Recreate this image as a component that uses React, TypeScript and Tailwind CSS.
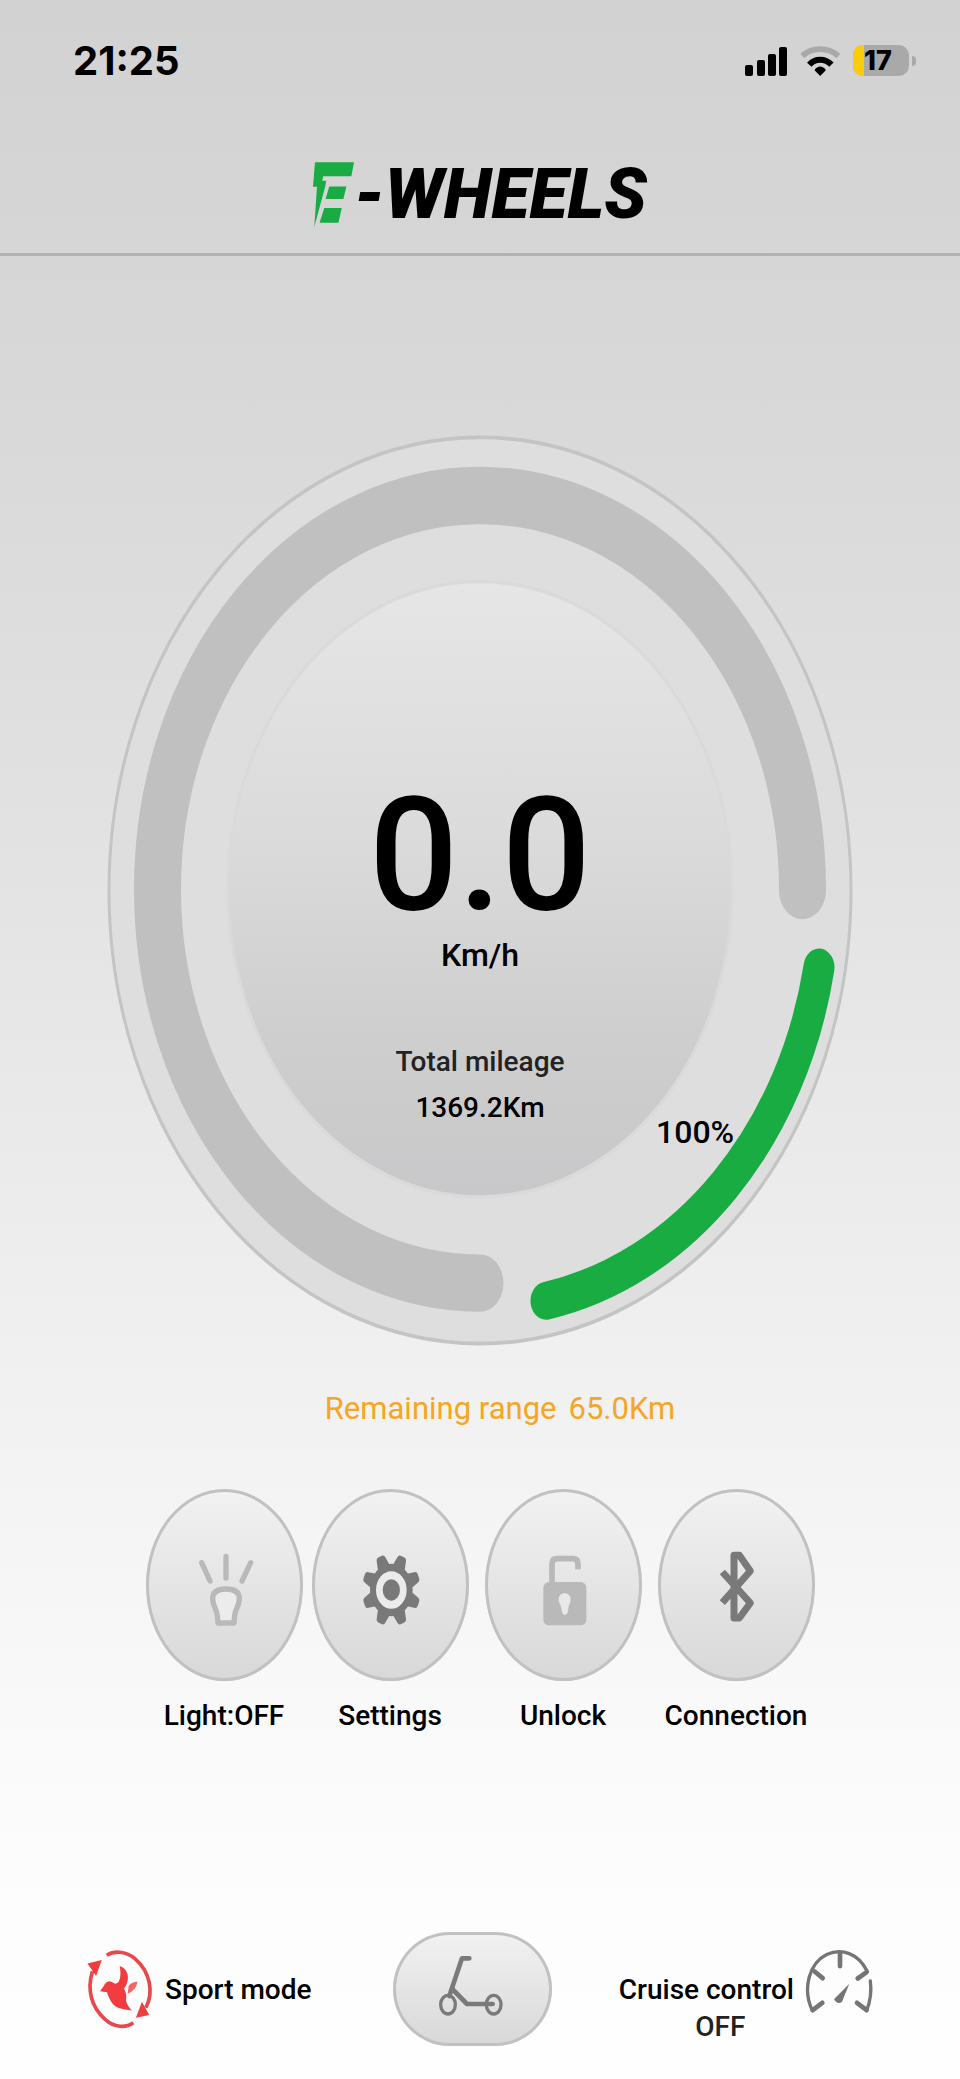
import type { ReactNode } from "react";

function StatusBar() {
  return (
    <div className="flex h-[121px] items-center justify-between pl-[73px] pr-[44px]">
      <span className="font-['Inter',sans-serif] text-[40px] font-bold leading-[40px] text-black">21:25</span>
      <div className="flex items-center gap-[12px]">
        {/* signal */}
        <svg viewBox="0 0 43 30" className="h-[30px] w-[43px]" fill="#000">
          <rect x="0" y="19" width="8" height="11" rx="2" />
          <rect x="12" y="14" width="8" height="16" rx="2" />
          <rect x="23" y="8" width="8" height="22" rx="2" />
          <rect x="34" y="1" width="8" height="29" rx="2" />
        </svg>
        {/* wifi */}
        <svg viewBox="238 42 124 96" className="h-[32px] w-[41px]" fill="none">
          <path d="M245 75C273 47 325 47 354 75" stroke="#a9a9a9" strokeWidth="17" />
          <path d="M266 101C284 81 314 81 333 101" stroke="#000" strokeWidth="18" />
          <path d="M299 135L282 118C290 103 308 103 316 118Z" fill="#000" />
        </svg>
        {/* battery */}
        <div className="flex items-center gap-[3px]">
          <div className="flex h-[31px] w-[56px] items-center overflow-hidden rounded-[10px] bg-[#a9a9a9]">
            <div className="h-full w-[11px] bg-[#fdcc08]" />
            <span className="font-['Inter',sans-serif] text-[27px] font-extrabold leading-[30px] text-black">17</span>
          </div>
          <div className="h-[10px] w-[4px] rounded-r-full bg-[#a9a9a9]" />
        </div>
      </div>
    </div>
  );
}

function Logo() {
  return (
    <div className="flex items-center justify-center">
      <svg viewBox="66 69 124 195" className="h-[65px] w-[41px]" fill="#18ac42">
        <path d="M72 69H190L182 111H97L94 125H106L103 142L70 264L78 143H66Z" />
        <path d="M115 142H167L158 180H104Z" />
        <path d="M100 207H153L143 252H86Z" />
      </svg>
      <span className="text-[70px] font-black italic leading-[66px] text-black">-WHEELS</span>
    </div>
  );
}

function Dial() {
  return (
    <div className="relative mx-auto w-[746px] max-w-full">
      <svg viewBox="0 0 746 746" preserveAspectRatio="none" className="block h-[911px] w-full" fill="none">
        <defs>
          <linearGradient id="disc" x1="0" y1="0" x2="0" y2="1">
            <stop offset="0" stopColor="#e6e6e6" />
            <stop offset="0.4" stopColor="#dbdbdc" />
            <stop offset="0.75" stopColor="#cecece" />
            <stop offset="1" stopColor="#c8c8ca" />
          </linearGradient>
        </defs>
        <circle cx="373" cy="373" r="371" fill="#dedede" stroke="#c4c4c4" strokeWidth="3" />
        <circle cx="373" cy="372" r="252" fill="url(#disc)" stroke="#dadada" strokeWidth="3" />
        {/* speed track */}
        <path d="M695.5 373A322.5 322.5 0 1 0 373 694.5" stroke="#c0c0c0" strokeWidth="47" strokeLinecap="round" />
        {/* battery level */}
        <path d="M712 436A344 344 0 0 1 439 709" stroke="#18ac42" strokeWidth="31" strokeLinecap="round" />
      </svg>
      <div className="absolute inset-0 flex flex-col items-center pt-[340px] text-black">
        <span className="text-[157px] font-medium leading-[160px]">0.0</span>
        <span className="text-[32px] font-medium leading-[40px]">Km/h</span>
        <span className="mt-[64px] text-[28px] font-medium leading-[46px] text-[#222224]">Total mileage</span>
        <span className="text-[28px] font-medium leading-[46px]">1369.2Km</span>
      </div>
      <span className="absolute left-[549px] top-[677px] text-[32px] font-medium leading-[40px] text-black">100%</span>
    </div>
  );
}

const TEETH = [22.5, 67.5, 112.5, 157.5, 202.5, 247.5, 292.5, 337.5];

const ACTIONS: { label: string; icon: ReactNode }[] = [
  {
    label: "Light:OFF",
    icon: (
      <svg viewBox="48 30 471 574" className="h-full w-full" fill="none" stroke="#b9b9b9" strokeWidth="16" strokeLinecap="round" strokeLinejoin="round">
        <path d="M215 250L240 305M288 231V296M362 250L336 305" />
        <path d="M264 431L262 408C260 388 248 380 248 358C248 338 262 329 288 329C314 329 328 338 328 358C328 380 316 388 314 408L312 431Z" fill="#ececec" />
      </svg>
    ),
  },
  {
    label: "Settings",
    icon: (
      <svg viewBox="547 30 471 574" className="h-full w-full">
        <g transform="translate(785 332) scale(1 1.23)" fill="#797979">
          {TEETH.map((deg) => (
            <path key={deg} transform={`rotate(${deg})`} d="M-19 -58L-14 -80Q-13 -88 -6 -88H6Q13 -88 14 -80L19 -58Z" />
          ))}
          <circle r="55" fill="#ebebeb" stroke="#797979" strokeWidth="18" />
          <circle r="26" />
        </g>
      </svg>
    ),
  },
  {
    label: "Unlock",
    icon: (
      <svg viewBox="16 30 471 574" className="h-full w-full" fill="none">
        <path d="M217 314V254Q217 238 232 238H280Q295 238 295 254V270" stroke="#b9b9b9" strokeWidth="17" />
        <rect x="191" y="308" width="129" height="130" rx="17" fill="#b9b9b9" />
        <path d="M255 342C266 342 273 350 273 361C273 373 266 376 266 388L263 402Q255 412 248 402L245 388C245 376 237 373 237 361C237 350 244 342 255 342Z" fill="#e8e8e8" />
      </svg>
    ),
  },
  {
    label: "Connection",
    icon: (
      <svg viewBox="535 30 471 574" className="h-full w-full" fill="none" stroke="#797979" strokeWidth="21" strokeLinejoin="round">
        <path d="M728 278L812 371L779 416H763V228H779L812 275L728 370" />
      </svg>
    ),
  },
];

export default function App() {
  return (
    <main className="flex min-h-screen flex-col bg-[linear-gradient(180deg,#d2d2d2_0%,#d9d9d9_21%,#e3e3e3_42%,#f0f0f0_65%,#f9f9f9_82%,#fdfdfd_92%,#fefefe_100%)] font-['Roboto',sans-serif]">
      <header className="border-b-[3px] border-[#b1b2b2] pb-[26px]">
        <StatusBar />
        <div className="pt-[40px]">
          <Logo />
        </div>
      </header>

      <section className="pt-[179px]">
        <Dial />
        <p className="mt-[43px] flex justify-center gap-[12px] pl-10 text-[31px] leading-[40px] text-[#f5a623]">
          <span>Remaining range</span>
          <span>65.0Km</span>
        </p>
      </section>

      {/* quick actions */}
      <div className="mx-auto mt-[60px] grid w-full max-w-[682px] grid-cols-[162fr_170fr_176fr_170fr] pl-1">
        {ACTIONS.map((item) => (
          <button key={item.label} type="button" className="flex flex-col items-center gap-[15px]">
            <span className="block h-[192px] w-[157px] overflow-hidden rounded-[50%] bg-linear-to-b from-[#f2f2f2] to-[#d8d8d8] ring-3 ring-inset ring-[#c1c1c1]">
              {item.icon}
            </span>
            <span className="text-[28px] font-medium leading-[40px] text-black">{item.label}</span>
          </button>
        ))}
      </div>

      <nav className="mt-[196px] flex items-center justify-between pb-8 pl-[85px] pr-[86px]">
        <button type="button" className="flex items-center gap-[10px] pr-[14px]">
          <svg viewBox="75 110 210 250" className="h-[83px] w-[70px]" fill="#f23c3f">
            <path d="M140 132C160 119 195 117 225 142C272 183 282 245 258 290" fill="none" stroke="#e8484b" strokeWidth="11" />
            <path d="M220 335C198 351 164 351 135 325C93 288 80 235 97 180" fill="none" stroke="#e8484b" strokeWidth="11" />
            <path d="M82 157L125 146L108 194Z" />
            <path d="M228 320L246 272L268 312Z" />
            <path d="M120 240Q131 226 135 218Q143 205 157 213Q169 223 177 210Q185 192 179 164Q204 172 204 200Q203 218 192 232Q202 250 198 268Q202 285 216 298Q168 296 156 276Q144 256 141 243Z" />
            <path d="M206 224Q216 212 233 212Q228 238 203 248Z" fillOpacity="0.8" />
          </svg>
          <span className="text-[28px] font-medium leading-[37px] text-black">Sport mode</span>
        </button>

        <button
          type="button"
          aria-label="Scooter"
          className="h-[114px] w-[159px] rounded-full bg-linear-to-b from-[#f2f2f2] to-[#d8d8d8] ring-3 ring-inset ring-[#c1c1c1]"
        >
          <svg viewBox="39 66 477 342" className="h-full w-full" fill="none" stroke="#7a7a7a" strokeWidth="10">
            <path d="M268 145H246L208 258" strokeWidth="14" strokeLinecap="round" strokeLinejoin="round" />
            <path d="M217 237L261 282H338" strokeWidth="14" strokeLinecap="round" strokeLinejoin="round" />
            <ellipse cx="204" cy="284" rx="22" ry="28" />
            <ellipse cx="341" cy="284" rx="22" ry="28" />
          </svg>
        </button>

        <button type="button" className="flex items-start gap-[10px]">
          <span className="flex flex-col items-center pt-[37px] text-[28px] font-medium leading-[37px] text-black">
            <span>Cruise control</span>
            <span className="pl-7 text-[#222]">OFF</span>
          </span>
          <svg viewBox="612 115 210 200" className="mt-3.5 h-[67px] w-[70px]" fill="none" stroke="#757575" strokeWidth="10" strokeLinecap="round">
            <path d="M637 302C606 236 628 160 680 134C725 114 775 130 802 185" />
            <path d="M811 213C815 245 812 272 800 302" />
            <path d="M720 130V169M644 185L668 205M800 187L773 206M638 301L667 279M800 301L771 279" strokeWidth="14" />
            <path d="M748 222L726 276Q714 286 702 268Z" fill="#757575" stroke="none" />
          </svg>
        </button>
      </nav>
    </main>
  );
}
